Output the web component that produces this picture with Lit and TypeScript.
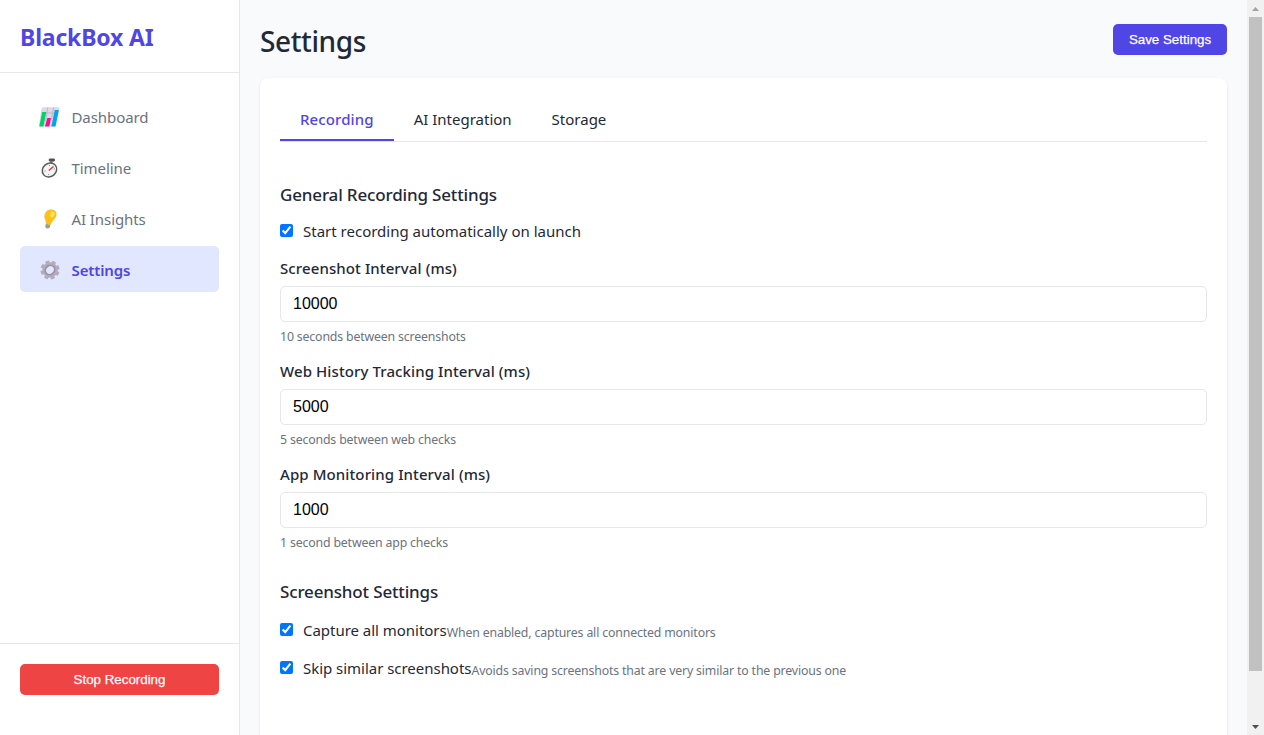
import { LitElement, html, css, svg } from "lit";
import { customElement, state } from "lit/decorators.js";

const icons: Record<string, unknown> = {
  Dashboard: svg`<svg viewBox="1 0 22 22" width="22" height="22">
    <path d="M5 1.2H20q1.6 0 1.4 1.6L18 19q-.3 1.5-1.8 1.5H2.200q-1.600 0-1.300-1.500L3.600 2.500Q3.900 1.200 5 1.200Z" fill="#dfd6e6"/>
    <path d="M3.200 7H20.500M9.800 1.500 7.500 15M15.700 1.500 13.500 13" stroke="#b9aec3" stroke-width=".8" fill="none"/>
    <path d="M4.200 6H8.200L5.500 20.500H1.300Z" fill="#00d26a"/>
    <path d="M9.300 12H13L11.300 20.500H7Z" fill="#f8108b"/>
    <path d="M16.800 4H20.800L17.500 20.500H13.300Z" fill="#00a6ed"/></svg>`,
  Timeline: svg`<svg viewBox="-1 0 22 22" width="22" height="22">
    <path d="M9.300 2H14.300V4H9.300Z" fill="#505050" stroke="#505050"/>
    <path d="M11.500 4 11 7" stroke="#737373" stroke-width="2.600"/>
    <ellipse cx="9.500" cy="13" rx="7.600" ry="6.600" transform="rotate(-40 9.500 13)" fill="#f5f5f5" stroke="#5c5c5c" stroke-width="1.500"/>
    <path d="M9.500 8V9.200M4.500 14H5.700M13.700 12H15M8.700 17V18" stroke="#8b8b8b"/>
    <path d="M8.800 13.500 13.500 9.500" stroke="#ed2632" stroke-width="1.300"/></svg>`,
  "AI Insights": svg`<svg viewBox="0 0 22 22" width="22" height="22">
    <path d="M6.800 15.500 11.500 16.500 10.700 19.500Q8.500 21.400 6.300 19.200Z" fill="#9b9b9b"/>
    <path d="M11 1.600C15.500 1 18.200 3.700 17.500 7.300 16.800 11 13.500 12 12 16.200Q9.500 17.500 6.900 15.800C7.100 12 4.700 10.500 5.500 7 6.200 4 8.200 2 11 1.600Z" fill="#fcc21b"/>
    <path d="M12.500 3.500Q16.500 3.500 15.500 7 14.500 9 12.500 9.500 10 7 12.500 3.500Z" fill="#ffe55c"/>
    <path d="M8.700 14.500 10.500 9.500" stroke="#f8b51b" stroke-width=".9"/></svg>`,
  Settings: svg`<svg viewBox="-1 0 22 22" width="22" height="22">
    <g transform="rotate(12 10 11)"><circle cx="10" cy="11" r="8" fill="none" stroke="#b4acbc" stroke-width="3.200" stroke-dasharray="3.770 2.513"/>
    <circle cx="10" cy="11" r="6" fill="none" stroke="#b4acbc" stroke-width="3.600"/></g>
    <ellipse cx="10" cy="11" rx="4.900" ry="4.300" transform="rotate(-40 10 11)" fill="#e0e7ff" stroke="#998ea4" stroke-width="1.600"/></svg>`,
};

const fields = [
  { label: "Screenshot Interval (ms)", value: "10000", hint: "10 seconds between screenshots" },
  { label: "Web History Tracking Interval (ms)", value: "5000", hint: "5 seconds between web checks" },
  { label: "App Monitoring Interval (ms)", value: "1000", hint: "1 second between app checks" },
];

@customElement("app-root")
export class AppRoot extends LitElement {
  @state() private tab = "Recording";

  static styles = css`
    :host { display: flex; width: 100%; height: 735px; overflow: hidden; background: #f9fafb;
      color: #1f2937; font: 15px/24px "Noto Sans", "Open Sans", sans-serif; }
    * { box-sizing: border-box; }
    h1, h2, h3 { margin: 0; white-space: nowrap; }
    .sidebar { width: 240px; flex: none; background: #fff; border-right: 1px solid #e5e7eb; display: flex; flex-direction: column; }
    .brand { height: 73px; padding: 21px 20px 0; border-bottom: 1px solid #e5e7eb; }
    .brand h2 { font-size: 23px; line-height: 32px; color: #4f46e5; font-weight: 700; letter-spacing: -.17px; }
    nav { padding: 20px; flex: 1; display: flex; flex-direction: column; gap: 5px; }
    .item { height: 46px; display: flex; align-items: center; padding: 2px 0 0 19px; gap: 10.5px; color: #6b7280; border-radius: 5px; letter-spacing: -.08px; }
    .item svg { display: block; }
    .item.active { background: #e0e7ff; color: #4f46e5; font-weight: 600; letter-spacing: -.12px; }
    .foot { height: 92px; padding: 20px; border-top: 1px solid #e5e7eb; }
    button { font: 500 13.333px/15px "Liberation Sans", Arial, sans-serif; color: #fff; border: 0; border-radius: 5px; height: 31px; padding: 8px 16px; -webkit-text-stroke: .25px #fff; }
    .stop { width: 100%; background: #ef4444; }
    .save { background: #4f46e5; width: 114px; padding: 8px 0; }
    main { flex: 1; padding: 24px 20px 0; display: flex; flex-direction: column; min-width: 0; }
    .top { height: 54px; flex: none; display: flex; justify-content: space-between; align-items: flex-start; }
    h1 { font-size: 28px; line-height: 34px; font-weight: 500; letter-spacing: -.38px; }
    .card { flex: none; height: 700px; background: #fff; border-radius: 8px; padding: 20px; box-shadow: 0 1px 3px rgba(0,0,0,.1); }
    .tabs { display: flex; height: 44px; border-bottom: 1px solid #e5e7eb; }
    .tab { padding: 9px 20px 0; height: 43px; white-space: nowrap; }
    .tab.active { color: #4f46e5; font-weight: 500; border-bottom: 2px solid #4f46e5; letter-spacing: .1px; }
    h3 { font-size: 17px; line-height: 26px; font-weight: 500; letter-spacing: -.16px; }
    .general { padding-top: 40px; }
    .check { display: flex; height: 24px; white-space: nowrap; }
    .check input { margin: 5px 10px 0 0; width: 13px; height: 13px; flex: none; }
    .general .check { margin: 11px 0 13px; }
    .field { height: 103px; }
    .label { font-weight: 500; display: block; letter-spacing: .1px; }
    .box { display: block; width: 100%; height: 36px; margin-top: 6px; padding: 0 12px; border: 1px solid #e5e7eb; border-radius: 5px;
      font: 16px "Liberation Sans", Arial, sans-serif; color: #000; background: #fff; }
    .hint { color: #6b7280; font-size: 12.300px; line-height: 20px; display: block; margin-top: 5px; letter-spacing: -.15px; }
    .shots { padding-top: 14px; }
    .shots .check { margin-top: 13px; height: 25px; letter-spacing: -.03px; }
    .shots .hint { line-height: 29px; margin: 0; letter-spacing: -.15px; }
    .scroll { width: 17px; flex: none; background: #f1f1f1; display: flex; flex-direction: column; align-items: center; justify-content: space-between; }
    .scroll svg { display: block; flex: none; }
    .thumb { width: 13px; height: 654px; background: #c1c1c1; margin-bottom: 47px; }
  `;

  render() {
    return html`
      <aside class="sidebar">
        <div class="brand"><h2>BlackBox AI</h2></div>
        <nav>${Object.keys(icons).map((n) => html`<div class="item ${n === "Settings" ? "active" : ""}">${icons[n]}<span>${n}</span></div>`)}</nav>
        <div class="foot"><button class="stop">Stop Recording</button></div>
      </aside>
      <main>
        <div class="top"><h1>Settings</h1><button class="save">Save Settings</button></div>
        <section class="card">
          <div class="tabs">${["Recording", "AI Integration", "Storage"].map((t) => html`<div class="tab ${t === this.tab ? "active" : ""}" @click=${() => (this.tab = t)}>${t}</div>`)}</div>
          <div class="general">
            <h3>General Recording Settings</h3>
            <label class="check"><input type="checkbox" checked /><span>Start recording automatically on launch</span></label>
            ${fields.map((f) => html`<div class="field"><label class="label"><span>${f.label}</span></label><input class="box" .value=${f.value} /><span class="hint">${f.hint}</span></div>`)}
          </div>
          <div class="shots">
            <h3>Screenshot Settings</h3>
            <label class="check"><input type="checkbox" checked /><span>Capture all monitors</span><span class="hint">When enabled, captures all connected monitors</span></label>
            <label class="check"><input type="checkbox" checked /><span>Skip similar screenshots</span><span class="hint">Avoids saving screenshots that are very similar to the previous one</span></label>
          </div>
        </section>
      </main>
      <div class="scroll">
        <svg width="17" height="17"><path d="M5 11H12L8.500 7Z" fill="#a3a3a3"/></svg>
        <div class="thumb"></div>
        <svg width="17" height="17"><path d="M5 7H12L8.500 11Z" fill="#505050"/></svg>
      </div>`;
  }
}
